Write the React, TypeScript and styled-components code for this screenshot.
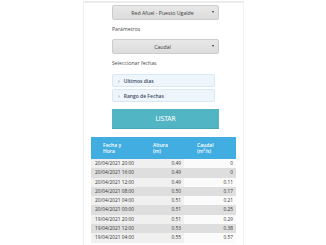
import styled, { createGlobalStyle } from "styled-components";

const GlobalStyles = createGlobalStyle`
  *, *::before, *::after {
    box-sizing: border-box;
    margin: 0;
    padding: 0;
  }
  body {
    background: #ffffff;
    font-family: "Open Sans", "Liberation Sans", sans-serif;
    overflow: hidden;
  }
`;

const Page = styled.div`
  width: 326px;
  height: 245px;
  background: #fff;
  overflow: hidden;
`;

const Panel = styled.div`
  margin-left: 83px;
  width: 161px;
  height: 245px;
  border-left: 1px solid #f1f1f1;
  border-right: 1px solid #f3f3f3;
  border-top: 2px solid #ececec;
  margin-top: 1px;
  padding-top: 2px;
`;

const Form = styled.div`
  margin-left: 28px;
  width: 107px;
  display: flex;
  flex-direction: column;
`;

const Select = styled.div`
  height: 15px;
  background: linear-gradient(#e8e8e8, #dcdcdc);
  border: 1px solid #cdcdcd;
  border-radius: 2px;
  display: flex;
  align-items: center;
  justify-content: center;
  position: relative;
  font-size: 5.2px;
  color: #3a3a3a;
  padding-right: 6px;
`;

const Caret = styled.span`
  position: absolute;
  right: 4px;
  top: 5px;
  width: 0;
  height: 0;
  border-left: 1.6px solid transparent;
  border-right: 1.6px solid transparent;
  border-top: 2.6px solid #333;
`;

const Label = styled.div<{ $top: number; $bottom: number }>`
  font-size: 5.2px;
  color: #4a4a4a;
  margin-top: ${(p) => p.$top}px;
  margin-bottom: ${(p) => p.$bottom}px;
  line-height: 8px;
`;

const Option = styled.div`
  height: 13px;
  margin-right: 4px;
  margin-bottom: 2px;
  background: #eef6fc;
  border: 1px solid #d9e8f3;
  border-radius: 2px;
  display: flex;
  align-items: center;
  padding-left: 5px;
  gap: 4px;
  font-size: 5px;
  font-weight: 600;
  color: #3d4b5c;
`;

const Bullet = styled.span`
  font-size: 5px;
  color: #7a8da0;
`;

const Button = styled.div`
  margin-top: 5px;
  height: 20px;
  background: #52b5c4;
  border-bottom: 1px solid #47a6b4;
  display: flex;
  align-items: center;
  justify-content: center;
  color: #ffffff;
  font-family: "DejaVu Sans", "Liberation Sans", sans-serif;
  font-stretch: condensed;
  font-size: 6.8px;
  font-weight: normal;
  letter-spacing: -0.1px;
`;

const Table = styled.table`
  margin-top: 8px;
  margin-left: 7px;
  width: 145px;
  border-collapse: collapse;
  table-layout: fixed;
  font-size: 4.8px;
  color: #333;
`;

const HeadCell = styled.th<{ $w: number; $pad: number }>`
  width: ${(p) => p.$w}px;
  height: 22px;
  background: #42ade0;
  color: #fff;
  font-weight: 600;
  text-align: left;
  vertical-align: middle;
  padding-left: ${(p) => p.$pad}px;
  font-size: 5px;
  line-height: 6.5px;
`;

const Row = styled.tr<{ $dark: boolean }>`
  height: 9.3px;
  background: ${(p) => (p.$dark ? "#dedede" : "#f0f0f0")};
`;

const Cell = styled.td<{ $right?: boolean; $white?: boolean }>`
  padding: 0 ${(p) => (p.$right ? "3px" : "0")} 0 ${(p) => (p.$right ? "0" : "4px")};
  text-align: ${(p) => (p.$right ? "right" : "left")};
  background: ${(p) => (p.$white ? "#fbfbfb" : "transparent")};
  line-height: 9.3px;
  white-space: nowrap;
`;

const rows = [
  ["20/04/2021 20:00", "0.49", "0"],
  ["20/04/2021 16:00", "0.49", "0"],
  ["20/04/2021 12:00", "0.49", "0.11"],
  ["20/04/2021 08:00", "0.50", "0.17"],
  ["20/04/2021 04:00", "0.51", "0.21"],
  ["20/04/2021 00:00", "0.51", "0.25"],
  ["19/04/2021 20:00", "0.51", "0.29"],
  ["19/04/2021 12:00", "0.53", "0.38"],
  ["19/04/2021 04:00", "0.55", "0.57"],
];

export default function App() {
  return (
    <Page>
      <GlobalStyles />
      <Panel>
        <Form>
          <Select>
            Red Afuel - Puesto Ugalde
            <Caret />
          </Select>
          <Label $top={5} $bottom={6}>
            Parámetros
          </Label>
          <Select>
            Caudal
            <Caret />
          </Select>
          <Label $top={5} $bottom={7}>
            Seleccionar fechas
          </Label>
          <Option>
            <Bullet>›</Bullet>Ultimos dias
          </Option>
          <Option>
            <Bullet>›</Bullet>Rango de Fechas
          </Option>
          <Button>LISTAR</Button>
        </Form>
        <Table>
          <thead>
            <tr>
              <HeadCell $w={52} $pad={12}>
                Fecha y<br />
                Hora
              </HeadCell>
              <HeadCell $w={41} $pad={10}>
                Altura
                <br />
                (m)
              </HeadCell>
              <HeadCell $w={52} $pad={13}>
                Caudal
                <br />
                (m³/s)
              </HeadCell>
            </tr>
          </thead>
          <tbody>
            {rows.map((r, i) => (
              <Row key={r[0]} $dark={i % 2 === 1}>
                <Cell>{r[0]}</Cell>
                <Cell $right>{r[1]}</Cell>
                <Cell $right $white={i % 2 === 0}>
                  {r[2]}
                </Cell>
              </Row>
            ))}
          </tbody>
        </Table>
      </Panel>
    </Page>
  );
}
